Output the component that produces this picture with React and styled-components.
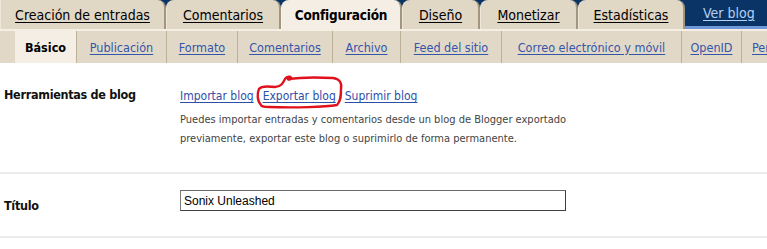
import React from "react";
import styled, { createGlobalStyle } from "styled-components";

const GlobalStyle = createGlobalStyle`
  html, body { margin: 0; padding: 0; background: #ffffff; }
  body {
    font-family: "DejaVu Sans Condensed", "DejaVu Sans", Verdana, sans-serif;
    font-stretch: condensed;
    color: #000;
  }
`;

const Page = styled.div`
  width: 767px;
  overflow: hidden;
`;

const TabBar = styled.div`
  display: flex;
  align-items: stretch;
  height: 29px;
  background: #0b3466;
`;

const Tab = styled.a`
  box-sizing: border-box;
  flex: 0 0 ${(p) => p.$w}px;
  display: flex;
  align-items: center;
  justify-content: center;
  padding-top: 1px;
  background: ${(p) => (p.$active ? "#f4eee4" : "#e1d7c5")};
  border-radius: ${(p) => (p.$first ? "0 8px 0 0" : "8px 8px 0 0")};
  border-left: 1px solid ${(p) => (p.$active ? "#f8f4ee" : "#eee6d8")};
  border-right: 2px solid #a3957e;
  font-size: ${(p) => (p.$active ? 13.5 : 14)}px;
  letter-spacing: ${(p) => (p.$active ? "-0.2px" : "0")};
  font-weight: ${(p) => (p.$active ? 700 : 400)};
  color: #000;
  text-decoration: ${(p) => (p.$active ? "none" : "underline")};
  text-underline-offset: 2px;
  white-space: nowrap;
  cursor: pointer;
`;

const ViewBlog = styled.a`
  flex: 1;
  display: flex;
  align-items: center;
  padding: 0 0 0 18px;
  border-bottom: 3px solid #6f98d8;
  font-size: 14px;
  color: #b4d0f4;
  text-decoration: underline;
  text-underline-offset: 2px;
  white-space: nowrap;
`;

const SubNavWrap = styled.div`
  background: #f4eee4;
  padding-top: 2px;
`;

const SubNav = styled.div`
  display: flex;
  height: 32px;
  padding-left: 15px;
  background: #e2d8c7;
`;

const SubTab = styled.a`
  box-sizing: border-box;
  flex: 0 0 ${(p) => (p.$w ? `${p.$w}px` : "auto")};
  display: flex;
  align-items: center;
  justify-content: ${(p) => (p.$w ? "center" : "flex-start")};
  padding: ${(p) => (p.$w ? "0" : "0 0 0 10px")};
  background: ${(p) => (p.$active ? "#f4eee4" : "transparent")};
  border-right: 1px solid #bdb099;
  font-size: 12.5px;
  font-weight: ${(p) => (p.$active ? 700 : 400)};
  color: ${(p) => (p.$active ? "#000" : "#3355aa")};
  text-decoration: ${(p) => (p.$active ? "none" : "underline")};
  text-underline-offset: 2px;
  white-space: nowrap;
`;

const Row = styled.div`
  display: grid;
  grid-template-columns: 180px 1fr;
  padding: ${(p) => p.$pad};
  border-bottom: 2px solid #ececec;
`;

const Label = styled.div`
  padding-left: 4px;
  padding-top: ${(p) => p.$top || 0}px;
  font-size: 12.5px;
  letter-spacing: -0.3px;
  font-weight: 700;
  color: #111;
`;

const Content = styled.div`
  display: flex;
  flex-direction: column;
`;

const Links = styled.div`
  position: relative;
  display: flex;
  gap: 9px;
  padding-top: 2px;
  font-size: 12px;
`;

const Link = styled.a`
  color: #2e4fa8;
  text-decoration: underline;
  text-underline-offset: 2px;
  position: relative;
  z-index: 1;
`;

const Circle = styled.svg`
  position: absolute;
  left: 75px;
  top: -12px;
  width: 90px;
  height: 35px;
  overflow: visible;
`;

const Description = styled.p`
  margin: 7px 0 0;
  font-size: 11px;
  line-height: 19px;
  color: #444;
`;

const TextInput = styled.input`
  box-sizing: border-box;
  width: 386px;
  height: 21px;
  padding: 0 3px;
  border: 1px solid #7b7b7b;
  border-top-color: #6a6a6a;
  border-right-color: #404040;
  border-bottom-color: #404040;
  font-family: "Liberation Sans", Arial, sans-serif;
  font-size: 12px;
  color: #000;
  background: #fff;
  outline: none;
`;

const tabs = [
  { t: "Creación de entradas", w: 166 },
  { t: "Comentarios", w: 115 },
  { t: "Configuración", w: 121 },
  { t: "Diseño", w: 78 },
  { t: "Monetizar", w: 98 },
  { t: "Estadísticas", w: 107 },
];
const subTabs = [
  { t: "Básico", w: 62 },
  { t: "Publicación", w: 90 },
  { t: "Formato", w: 71 },
  { t: "Comentarios", w: 95 },
  { t: "Archivo", w: 68 },
  { t: "Feed del sitio", w: 101 },
  { t: "Correo electrónico y móvil", w: 180 },
  { t: "OpenID", w: 60 },
  { t: "Permisos" },
];

export default function App() {
  return (
    <Page>
      <GlobalStyle />
      <TabBar>
        {tabs.map((x, i) => (
          <Tab key={x.t} $w={x.w} $first={i === 0} $active={x.t === "Configuración"}>{x.t}</Tab>
        ))}
        <ViewBlog>Ver blog</ViewBlog>
      </TabBar>
      <SubNavWrap>
        <SubNav>
          {subTabs.map((x, i) => (
            <SubTab key={x.t} $w={x.w} $active={i === 0}>{x.t}</SubTab>
          ))}
        </SubNav>
      </SubNavWrap>
      <Row $pad="24px 0 24px">
        <Label>Herramientas de blog</Label>
        <Content>
          <Links>
            <Link>Importar blog</Link>
            <Link>Exportar blog</Link>
            <Link>Suprimir blog</Link>
            <Circle viewBox="0 0 90 35">
              <path
                d="M6 30 C2 26 2 18 4 14 C6 11 12 11 20 12 C26 12 28 8 30 4 C32 1 36 1 36 3 C36 5 33 5 33 4 C40 3 60 2 78 3 C85 4 87 8 86 14 C86 20 86 26 82 30 C70 32 40 33 14 32 C9 32 6 31 6 30 Z"
                fill="none"
                stroke="#e0101c"
                strokeWidth="2.4"
                strokeLinejoin="round"
              />
            </Circle>
          </Links>
          <Description>
            Puedes importar entradas y comentarios desde un blog de Blogger exportado
            <br />
            previamente, exportar este blog o suprimirlo de forma permanente.
          </Description>
        </Content>
      </Row>
      <Row $pad="16px 0 23px">
        <Label $top={8}>Título</Label>
        <Content>
          <TextInput defaultValue="Sonix Unleashed" />
        </Content>
      </Row>
    </Page>
  );
}
